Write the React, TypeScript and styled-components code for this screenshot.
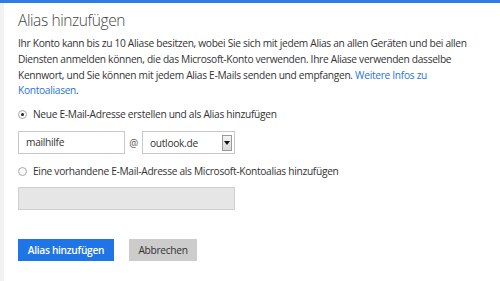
import React from "react";
import styled, { createGlobalStyle } from "styled-components";

const Global = createGlobalStyle`
  html, body { margin: 0; padding: 0; background: #fff; }
  body { font-family: "Open Sans", "Noto Sans", sans-serif; }
`;

const Page = styled.div`
  width: 500px;
  height: 281px;
  box-sizing: border-box;
  border-top: 3px solid #2f7ce8;
  display: flex;
  overflow: hidden;
`;

const SideStrip = styled.div`
  width: 4px;
  background: #f2f2f2;
  flex: none;
`;

const Content = styled.main`
  flex: 1;
  padding: 6px 0 0 14px;
  color: #333;
  letter-spacing: -0.3px;
`;

const Title = styled.h1`
  margin: 0 0 5px 0;
  font-family: "Open Sans", sans-serif;
  font-weight: 300;
  font-size: 15.5px;
  letter-spacing: -0.4px;
  line-height: 22px;
  color: #444;
`;

const Para = styled.p`
  margin: 0 0 8px 0;
  font-size: 10.2px;
  line-height: 15.8px;
  color: #333;
`;

const Line = styled.span`
  display: block;
  white-space: nowrap;
`;

const Link = styled.a`
  color: #2a74d8;
  text-decoration: none;
`;

const RadioRow = styled.label`
  display: flex;
  align-items: center;
  gap: 6px;
  font-size: 10.2px;
  line-height: 14px;
  height: 14px;
  color: #333;
`;

const RadioCircle = styled.span<{ $checked?: boolean }>`
  width: 9px;
  height: 9px;
  border-radius: 50%;
  border: 1px solid #a9a9a9;
  background: #fafafa;
  box-sizing: border-box;
  display: flex;
  align-items: center;
  justify-content: center;
  &::after {
    content: "";
    width: 3px;
    height: 3px;
    border-radius: 50%;
    background: ${(p) => (p.$checked ? "#222" : "transparent")};
  }
`;

const FieldRow = styled.div`
  display: flex;
  align-items: center;
  margin: 10px 0 10px 0;
`;

const TextBox = styled.div<{ $width: number; $disabled?: boolean }>`
  width: ${(p) => p.$width}px;
  height: 23px;
  box-sizing: border-box;
  border: 1px solid ${(p) => (p.$disabled ? "#cfcfcf" : "#c8c8c8")};
  background: ${(p) => (p.$disabled ? "#e6e6e6" : "#fff")};
  font-size: 10.2px;
  line-height: 21px;
  padding: 0 7px;
  color: #333;
`;

const At = styled.span`
  font-size: 10px;
  color: #555;
  width: 17px;
  text-align: center;
`;

const Select = styled.div`
  width: 93px;
  height: 23px;
  box-sizing: border-box;
  border: 1px solid #c8c8c8;
  display: flex;
  align-items: center;
  justify-content: space-between;
  padding: 0 2px 0 7px;
  font-size: 10.2px;
  color: #333;
`;

const DropBtn = styled.span`
  width: 10px;
  height: 16px;
  box-sizing: border-box;
  background: linear-gradient(#f4f4f4, #d8d8d8);
  border: 1px solid #9a9a9a;
  display: flex;
  align-items: center;
  justify-content: center;
`;

const DisabledWrap = styled.div`
  margin-top: 9px;
`;

const Buttons = styled.div`
  display: flex;
  gap: 15px;
  margin-top: 29px;
`;

const Button = styled.button<{ $primary?: boolean }>`
  height: 22px;
  border: none;
  padding: 0;
  display: flex;
  align-items: center;
  justify-content: center;
  white-space: nowrap;
  font-family: "Open Sans", sans-serif;
  font-size: 10.2px;
  letter-spacing: -0.3px;
  font-weight: ${(p) => (p.$primary ? 600 : 400)};
  background: ${(p) => (p.$primary ? "#1f74e6" : "#cccccc")};
  color: ${(p) => (p.$primary ? "#fff" : "#333")};
  width: ${(p) => (p.$primary ? 96 : 68)}px;
`;

export default function App() {
  return (
    <>
      <Global />
      <Page>
        <SideStrip />
        <Content>
          <Title>Alias hinzufügen</Title>
          <Para>
            <Line>Ihr Konto kann bis zu 10 Aliase besitzen, wobei Sie sich mit jedem Alias an allen Geräten und bei allen</Line>
            <Line>Diensten anmelden können, die das Microsoft-Konto verwenden. Ihre Aliase verwenden dasselbe</Line>
            <Line>
              Kennwort, und Sie können mit jedem Alias E-Mails senden und empfangen. <Link href="#">Weitere Infos zu</Link>
            </Line>
            <Line>
              <Link href="#">Kontoaliasen</Link>.
            </Line>
          </Para>
          <RadioRow>
            <RadioCircle $checked />
            Neue E-Mail-Adresse erstellen und als Alias hinzufügen
          </RadioRow>
          <FieldRow>
            <TextBox $width={107}>mailhilfe</TextBox>
            <At>@</At>
            <Select>
              outlook.de
              <DropBtn>
                <svg width="6" height="4" viewBox="0 0 6 4">
                  <path d="M0 0 H6 L3 4 Z" fill="#111" />
                </svg>
              </DropBtn>
            </Select>
          </FieldRow>
          <RadioRow>
            <RadioCircle />
            Eine vorhandene E-Mail-Adresse als Microsoft-Kontoalias hinzufügen
          </RadioRow>
          <DisabledWrap>
            <TextBox $width={217} $disabled />
          </DisabledWrap>
          <Buttons>
            <Button $primary>Alias hinzufügen</Button>
            <Button>Abbrechen</Button>
          </Buttons>
        </Content>
      </Page>
    </>
  );
}
